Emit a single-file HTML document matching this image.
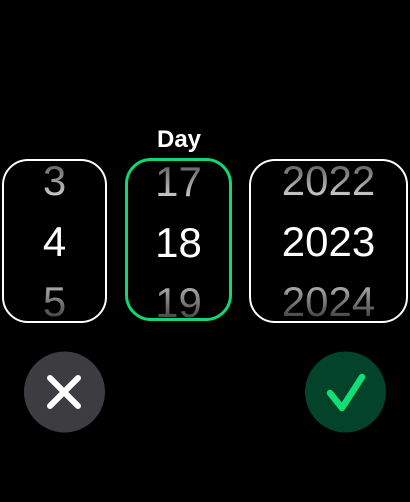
<!DOCTYPE html>
<html><head><style>
html,body{margin:0;padding:0;background:#000;width:410px;height:502px;overflow:hidden;font-family:"Liberation Sans",sans-serif}
.box{position:absolute;top:159px;height:160px;border:2.5px solid #fff;border-radius:26px;box-sizing:content-box;overflow:hidden}
.n{position:absolute;left:0;right:0;text-align:center;font-size:42px;line-height:42px;color:#fff}
.t{top:-1px;background:linear-gradient(#555,#ddd);-webkit-background-clip:text;color:transparent}
.m{top:60px}
.b{top:120px;background:linear-gradient(#bbb,#333);-webkit-background-clip:text;color:transparent}
</style></head><body>
<div style="position:absolute;left:119px;width:120px;top:125px;text-align:center;color:#fff;font-weight:bold;font-size:24px;line-height:30px">Day</div>
<div class="box" style="left:2px;width:101px"><div class="n t">3</div><div class="n m">4</div><div class="n b">5</div></div>
<div class="box" style="left:125px;width:101px;top:158px;height:157px;border:3.5px solid #12d66e;border-radius:26px"><div class="n t" style="top:0px">17</div><div class="n m" style="top:61px">18</div><div class="n b" style="top:121px">19</div></div>
<div class="box" style="left:249px;width:155px"><div class="n t">2022</div><div class="n m">2023</div><div class="n b">2024</div></div>
<svg width="410" height="502" style="position:absolute;left:0;top:0">
<circle cx="64.5" cy="392" r="40.5" fill="#3d3d41"/>
<path d="M50 378 L78 406 M78 378 L50 406" stroke="#fff" stroke-width="6" stroke-linecap="round"/>
<circle cx="345.5" cy="392" r="40.5" fill="#02432a"/>
<path d="M330 393 L342 408 L362 377" stroke="#10df75" stroke-width="6.5" stroke-linecap="round" stroke-linejoin="round" fill="none"/>
</svg>
</body></html>
